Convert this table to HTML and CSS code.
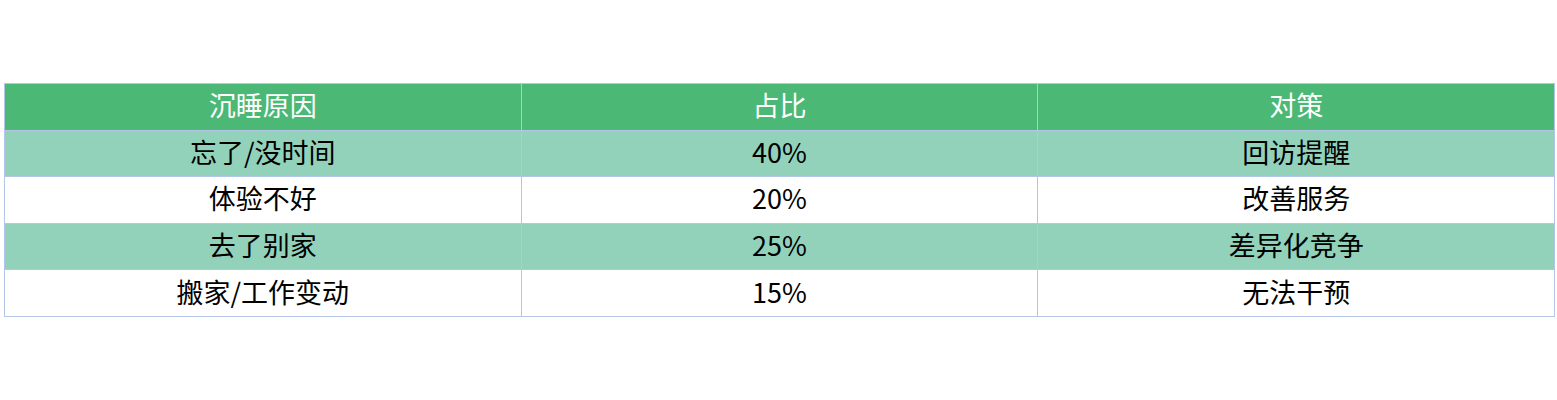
FILE: index.html
```html
<!DOCTYPE html>
<html lang="zh">
<head>
<meta charset="utf-8">
<link rel="stylesheet" href="styles.css">
</head>
<body>
<table class="tbl">
  <colgroup><col class="c"><col class="c"><col class="c"></colgroup>
  <thead>
    <tr class="head"><th>沉睡原因</th><th>占比</th><th>对策</th></tr>
  </thead>
  <tbody>
    <tr class="alt"><td>忘了/没时间</td><td>40%</td><td>回访提醒</td></tr>
    <tr><td>体验不好</td><td>20%</td><td>改善服务</td></tr>
    <tr class="alt"><td>去了别家</td><td>25%</td><td>差异化竞争</td></tr>
    <tr><td>搬家/工作变动</td><td>15%</td><td>无法干预</td></tr>
  </tbody>
</table>
</body>
</html>
```
FILE: styles.css
```css
html, body {
  margin: 0;
  padding: 0;
  background: #ffffff;
}
body {
  padding: 83px 0 0 4px;
  font-family: "Noto Sans CJK SC", "Noto Sans", sans-serif;
}
.tbl {
  border-collapse: collapse;
  width: 1551px;
  table-layout: fixed;
}
.c { width: 33.333%; }
.tbl th, .tbl td {
  border: 1px solid #b4c6e7;
  height: 41.6px;
  padding: 0 0 4px 0;
  text-align: center;
  vertical-align: middle;
  font-size: 27px;
  font-weight: 400;
  line-height: 1;
  color: #000000;
}
.head th {
  background: #4cb875;
  color: #ffffff;
}
.alt td {
  background: #92d2bb;
}
```
